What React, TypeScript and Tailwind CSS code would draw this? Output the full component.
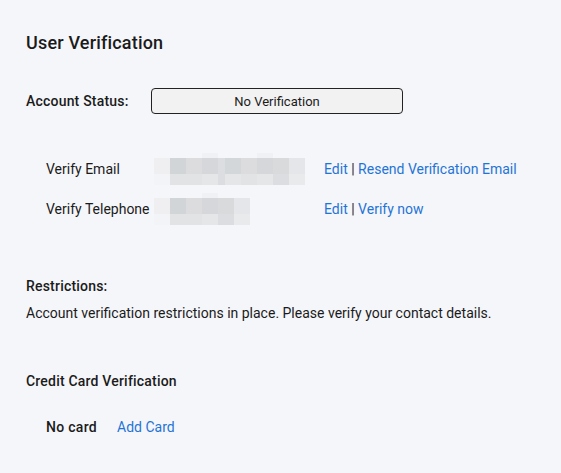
// User Verification panel

const EMAIL_BLUR = {
  w: 151,
  cols: [
    { x: 0, w: 16 }, { x: 16, w: 16 }, { x: 32, w: 16 }, { x: 48, w: 16 }, { x: 64, w: 7 },
    { x: 71, w: 16 }, { x: 87, w: 16 }, { x: 103, w: 16 }, { x: 119, w: 16 }, { x: 135, w: 16 },
  ],
  top: ['#efeff1', '#d2d5d8', '#dcdcde', '#d5d7da', '#dcdde0', '#d4d7da', '#dcdcde', '#d5d7da', '#d9dadc', '#e5e6e9'],
  bottom: ['#f3f4f7', '#e2e3e5', '#e2e3e5', '#e5e6e8', '#dcdde0', '#e5e6e8', '#e2e3e5', '#e5e6e8', '#dcdde0', '#e9eaec'],
  caps: [{ x: 48, w: 16 }, { x: 103, w: 16 }],
};

const PHONE_BLUR = {
  w: 96,
  cols: [
    { x: 0, w: 16 }, { x: 16, w: 16 }, { x: 32, w: 16 }, { x: 48, w: 16 }, { x: 64, w: 16 }, { x: 80, w: 16 },
  ],
  top: ['#efeff1', '#d2d5d8', '#dcdcde', '#d5d7da', '#d9dadc', '#e5e6e9'],
  bottom: ['#f3f4f7', '#e2e3e5', '#e2e3e5', '#e5e6e8', '#dcdde0', '#e9eaec'],
  caps: [{ x: 48, w: 16 }],
};

type Blur = typeof EMAIL_BLUR;

function Pixelated({ blur }: { blur: Blur }) {
  return (
    <svg width={blur.w} height={32} viewBox={`0 0 ${blur.w} 32`} className="block">
      {blur.caps.map((c, i) => (
        <rect key={'c' + i} x={c.x} y={0} width={c.w} height={5} fill="#f0f1f4" />
      ))}
      {blur.cols.map((c, i) => (
        <g key={i}>
          <rect x={c.x} y={5} width={c.w} height={16} fill={blur.top[i]} />
          <rect x={c.x} y={21} width={c.w} height={11} fill={blur.bottom[i]} />
        </g>
      ))}
    </svg>
  );
}

function Link({ children }: { children: React.ReactNode }) {
  return <a className="text-[#1f74d6] cursor-pointer">{children}</a>;
}

export default function App() {
  return (
    <div
      className="w-[561px] h-[473px] bg-[#f5f6fa] text-[#1b1b1b] px-[26px] pt-[31px]"
      style={{ fontFamily: 'Roboto, "Liberation Sans", sans-serif' }}
    >
      <h1 className="text-[18px] leading-[24px] font-medium tracking-[0.18px]">User Verification</h1>

      {/* Account status */}
      <div className="flex items-center mt-[33px]">
        <span className="w-[125px] text-[14px] leading-[20px] font-medium tracking-[0.2px]">Account Status:</span>
        <div className="w-[252px] h-[26px] flex items-center justify-center bg-[#f2f2f2] border border-[#222] rounded-[4px] text-[13px] pt-px">
          No Verification
        </div>
      </div>

      {/* Contact rows */}
      <div className="mt-[35px] pl-[20px] text-[14px]">
        <div className="flex items-center h-[40px]">
          <span className="w-[108px]">Verify Email</span>
          <div className="w-[170px]">
            <Pixelated blur={EMAIL_BLUR} />
          </div>
          <span>
            <Link>Edit</Link> <span className="text-[#2a1a2a]">|</span> <Link>Resend Verification Email</Link>
          </span>
        </div>
        <div className="flex items-center h-[40px]">
          <span className="w-[108px]">Verify Telephone</span>
          <div className="w-[170px]">
            <Pixelated blur={PHONE_BLUR} />
          </div>
          <span>
            <Link>Edit</Link> <span className="text-[#2a1a2a]">|</span> <Link>Verify now</Link>
          </span>
        </div>
      </div>

      {/* Restrictions */}
      <div className="mt-[47px] text-[14px] leading-[20px]">
        <div className="font-medium tracking-[0.2px]">Restrictions:</div>
        <p className="mt-[7px]">Account verification restrictions in place. Please verify your contact details.</p>
      </div>

      {/* Credit card */}
      <div className="mt-[48px] text-[14px] leading-[20px]">
        <div className="font-medium tracking-[0.2px]">Credit Card Verification</div>
        <div className="flex items-center gap-[20px] pl-[20px] mt-[26px]">
          <span className="font-medium tracking-[0.3px]">No card</span>
          <Link>Add Card</Link>
        </div>
      </div>
    </div>
  );
}
